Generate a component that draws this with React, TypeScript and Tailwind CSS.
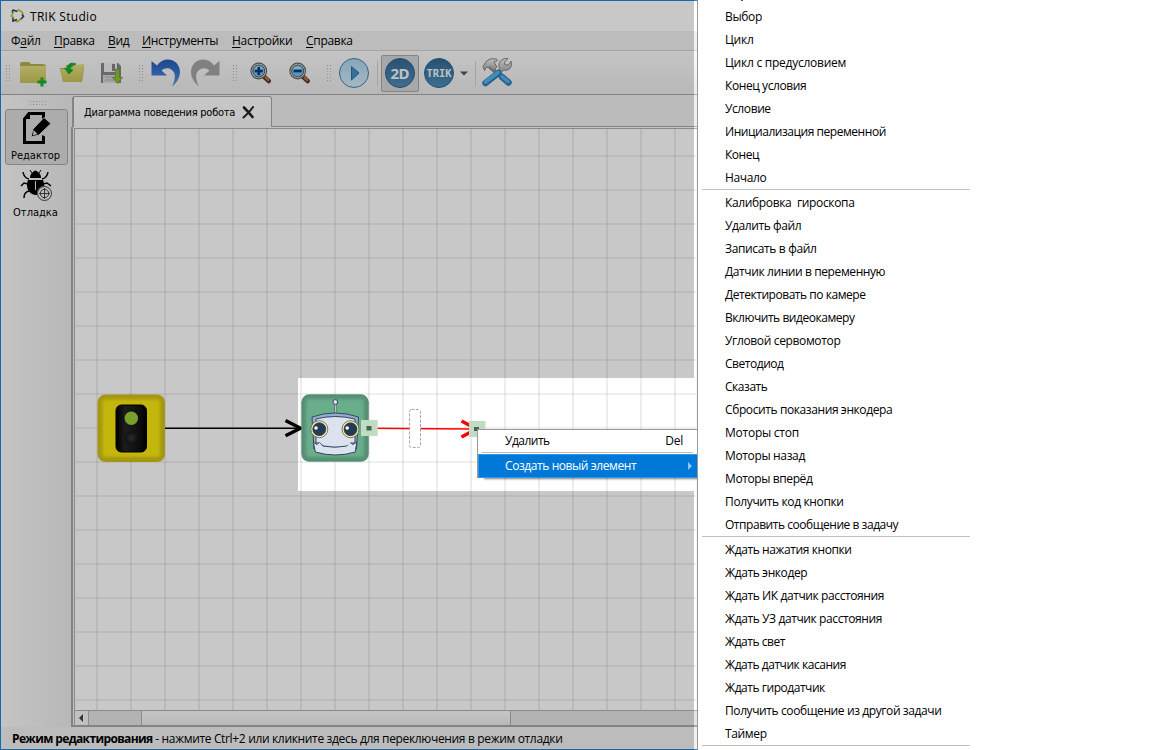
import React from "react";

const ui = "font-['Open_Sans','Noto_Sans',sans-serif]";
const tahoma = "font-['DejaVu_Sans_Condensed','DejaVu_Sans',sans-serif]";

function Cell({ x, w, children }: { x: number; w: number; children?: React.ReactNode }) {
  return (
    <svg className="h-[43px] shrink-0" width={w} height={43} viewBox={`${x} 51 ${w} 43`}>
      {children}
    </svg>
  );
}

function Grip({ x }: { x: number }) {
  return (
    <g fill="#b4b4b4">
      {[65, 68, 71, 74, 77, 80].map((y) => (
        <g key={y}>
          <rect x={x} y={y} width="1" height="1" />
          <rect x={x + 3} y={y} width="1" height="1" />
        </g>
      ))}
    </g>
  );
}

function Lens({ x, plus }: { x: number; plus?: boolean }) {
  return (
    <g transform={`translate(${x} 0)`}>
      <path d="M13 76l5.500 5" stroke="#4c3a30" strokeWidth="4.500" strokeLinecap="round" />
      <path d="M15.500 77.500l2.500 2.500" stroke="#bf7238" strokeWidth="2.500" strokeLinecap="round" />
      <circle cx="8.500" cy="71" r="7.800" fill="#e8e8e8" stroke="#666" strokeWidth="1.200" />
      <circle cx="8.500" cy="71" r="6" fill="#6fc0ea" stroke="#48565f" strokeWidth="1" />
      <path d="M4 69a5 5 0 0 1 9 0" fill="#a9dcf5" />
      <path d="M4.500 71h8" stroke="#0a3b78" strokeWidth="2.600" />
      {plus && <path d="M8.500 67v8" stroke="#0a3b78" strokeWidth="2.600" />}
    </g>
  );
}

function Toolbar() {
  return (
    <div className="flex h-[44px] border-b border-[#a9a9a9] bg-linear-to-b from-[#fafafa] to-[#ebebeb]">
      <Cell x={1} w={15}>
        <Grip x={6} />
      </Cell>
      <Cell x={16} w={38}>
        <defs>
          <linearGradient id="folder" x1="0" y1="0" x2="0" y2="1">
            <stop offset="0" stopColor="#e2df83" />
            <stop offset="1" stopColor="#c9c256" />
          </linearGradient>
        </defs>
        <path d="M20 64q0-2 2-2h7l2 2h12q3 0 3 3v14q0 2-2 2H22q-2 0-2-2z" fill="#b6af50" />
        <path d="M20 66h26v15q0 2-2 2H22q-2 0-2-2z" fill="url(#folder)" />
        <path d="M42 77.500v9M37.500 82h9" stroke="#22ac32" strokeWidth="3" />
      </Cell>
      <Cell x={54} w={42}>
        <path d="M60 68h6v-3h18v3l-2 14H63z" fill="#bbb34c" />
        <path d="M84.500 64l-3.500 18H63l-3-13h10l5-4z" fill="url(#folder)" />
        <path d="M76 64q-8-3-9 5l-2.500-1 4.500 6 4-4-3-.5q0-4 6-5.500z" fill="#16ac34" stroke="#16ac34" strokeWidth="1" />
      </Cell>
      <Cell x={96} w={38}>
        <path d="M101 63h17l3 3v17h-20z" fill="#84858d" />
        <rect x="104" y="63" width="13" height="9" fill="#eee" />
        <rect x="112" y="64" width="3" height="7" fill="#84858d" />
        <rect x="103" y="75" width="15" height="8" fill="#d8d8dc" />
        <path d="M105 77h10M105 80h10" stroke="#aaa" />
        <path d="M115.500 69h4v8.500h3l-5 6-5-6h3z" fill="#8bc22d" stroke="#65942a" strokeWidth=".7" />
      </Cell>
      <Cell x={134} w={13}>
        <Grip x={139} />
      </Cell>
      <Cell x={147} w={40}>
        <defs>
          <linearGradient id="undo" x1="0" y1="0" x2="0" y2="1">
            <stop offset="0" stopColor="#2559b4" />
            <stop offset="1" stopColor="#5493ec" />
          </linearGradient>
        </defs>
        <path d="M151.500 61v14.500H167l-5.500-5c5-4 11-2 13 3 1 4 0 8-2.500 13 6-5 8-10 8-15-1-13-16-16-23-6z" fill="url(#undo)" />
      </Cell>
      <Cell x={187} w={40}>
        <path d="M219.500 61v14.500H204l5.500-5c-5-4-11-2-13 3-1 4 0 8 2.500 13-6-5-8-10-8-15 1-13 16-16 23-6z" fill="#a4a4a4" />
      </Cell>
      <Cell x={227} w={18}>
        <Grip x={233} />
      </Cell>
      <Cell x={245} w={40}>
        <Lens x={250.3} plus />
      </Cell>
      <Cell x={285} w={36}>
        <Lens x={289.2} />
      </Cell>
      <Cell x={321} w={15}>
        <Grip x={327} />
      </Cell>
      <Cell x={336} w={40}>
        <defs>
          <linearGradient id="play" x1="0" y1="0" x2="0" y2="1">
            <stop offset="0" stopColor="#add4ed" />
            <stop offset="1" stopColor="#d3eafa" />
          </linearGradient>
        </defs>
        <circle cx="354" cy="73" r="14.500" fill="url(#play)" stroke="#4180ae" />
        <path d="M351.500 66.500v13.500l7.500-7z" fill="#4291c9" stroke="#326f9d" />
      </Cell>
      <Cell x={376} w={4}>
        <rect x="377" y="61" width="1" height="25" fill="#d0d0d0" />
      </Cell>
      <Cell x={380} w={40}>
        <defs>
          <linearGradient id="disc" x1="0" y1="0" x2="0" y2="1">
            <stop offset="0" stopColor="#356890" />
            <stop offset="1" stopColor="#4f8dbb" />
          </linearGradient>
        </defs>
        <rect x="381.500" y="55.500" width="37" height="36" rx="1.500" fill="#d6d6d6" stroke="#a8a8a8" />
        <circle cx="400" cy="73" r="14.500" fill="url(#disc)" stroke="#266698" />
        <text x="400" y="78.500" textAnchor="middle" fontSize="15" fontWeight="700" fill="#f3f7fa" className="font-['Noto_Sans',sans-serif]" textLength="19">2D</text>
      </Cell>
      <Cell x={420} w={54}>
        <circle cx="439" cy="73" r="14.500" fill="url(#disc)" stroke="#266698" />
        <text x="439" y="77" textAnchor="middle" fontSize="11" fontWeight="700" fill="#f3f7fa" className="font-['DejaVu_Sans_Mono',monospace]" textLength="25" lengthAdjust="spacingAndGlyphs">TRIK</text>
        <path d="M460 71.500h8l-4 4z" fill="#555" />
      </Cell>
      <Cell x={474} w={4}>
        <rect x="475" y="61" width="1" height="25" fill="#d0d0d0" />
      </Cell>
      <Cell x={478} w={40}>
        <defs>
          <linearGradient id="steel" x1="0" y1="0" x2="0" y2="1">
            <stop offset="0" stopColor="#f4f4f4" />
            <stop offset="1" stopColor="#a4a4a4" />
          </linearGradient>
        </defs>
        <path d="M489.500 66.500l10 9" stroke="#8d8d8d" strokeWidth="4" />
        <path d="M483 66.500l3.500-5.500q4-3.500 10-2l1 1.500-3.500 1.500 3 5-3.500 3.500-4-3.500-3.500.5-1.500 3z" fill="url(#steel)" stroke="#858585" />
        <path d="M497 71l2.500-2.500q-2-5.500 2-8.500 3-2 6.500-1.500l-3.500 3.500.5 3 3.500 0 2.500-4q2 5-1.500 8-3 2-6 1l-2.500 3z" fill="url(#steel)" stroke="#858585" />
        <path d="M502 77l6.500 5.500" stroke="#2f7fb6" strokeWidth="6.500" strokeLinecap="round" />
        <path d="M502 76.500l6 5" stroke="#5ab2ea" strokeWidth="3.500" strokeLinecap="round" />
        <path d="M498.500 73L485.500 83" stroke="#2f7fb6" strokeWidth="6.500" strokeLinecap="round" />
        <path d="M498 72.500L485.500 82" stroke="#5ab2ea" strokeWidth="3.800" strokeLinecap="round" />
      </Cell>
    </div>
  );
}

function TitleBar() {
  return (
    <div className="flex h-[31px] items-center border-t border-[#1f86db] bg-white pl-[9px]">
      <svg width="15" height="16" viewBox="0 0 15 16" fill="none" strokeWidth="1.600">
        <path d="M2.500 5V3.500q0-2 2-1l3 1" stroke="#34415c" />
        <path d="M7.500 1.500l4 2 2 3" stroke="#a3cf28" />
        <path d="M12 6.500l1.500 2-3 3" stroke="#34415c" />
        <path d="M11 10.500l-3 3H5.500" stroke="#a3cf28" />
        <path d="M7 11.500l-4 1.500V9" stroke="#34415c" />
        <path d="M4 10L1.500 8l2-4" stroke="#a3cf28" />
      </svg>
      <span className={`${ui} ml-[5px] pt-[2px] text-[12px] leading-none tracking-[0.3px]`}>TRIK Studio</span>
    </div>
  );
}

function MenuBar() {
  const items = [
    ["Ф", "а", "йл", "w-[43px]"],
    ["", "П", "равка", "w-[54px]"],
    ["", "В", "ид", "w-[34px]"],
    ["", "И", "нструменты", "w-[90px]"],
    ["", "Н", "астройки", "w-[74px]"],
    ["", "С", "правка", "w-[60px]"],
  ];
  return (
    <div className={`${ui} flex h-[20px] items-center border-b border-[#d2d2d2] bg-[#f0f0f0] pt-px pl-[10px] text-[12px] leading-none tracking-[-0.3px]`}>
      {items.map(([a, b, c, w]) => (
        <span key={b} className={`${w} shrink-0 whitespace-nowrap`}>
          {a}
          <span className="underline underline-offset-2">{b}</span>
          {c}
        </span>
      ))}
    </div>
  );
}

function Sidebar() {
  return (
    <div className={`${tahoma} flex w-[70px] shrink-0 flex-col bg-linear-to-r from-[#fafafa] to-[#ebebeb] pl-[4px] text-[11px] leading-none`}>
      <svg width="63" height="14" viewBox="5 95 63 14" fill="#b4b4b4" className="shrink-0">
        {[30, 33, 36, 39, 42, 45].map((x) => (
          <g key={x}>
            <rect x={x} y="101" width="1" height="1" />
            <rect x={x} y="104" width="1" height="1" />
          </g>
        ))}
      </svg>
      <div className="flex h-[56px] w-[63px] flex-col items-center rounded-[3px] border border-[#a8a8a8] bg-[#dcdcdc] pr-[2px]">
        <svg width="34" height="38" viewBox="18 110 34 38" className="shrink-0">
          <path d="M28 113.500h14.500v29H23.500V119z" fill="none" stroke="#000" strokeWidth="3" />
          <path d="M22 119l7-7v7z" fill="#000" />
          <path d="M41 121l6-5v22l-6-3z" fill="#dcdcdc" />
          <path d="M30 137l2-8L43 117.500l7 6L38 135z" fill="#000" stroke="#dcdcdc" strokeWidth="1" />
          <path d="M32.500 130l4 4-4.500 1.500z" fill="#dcdcdc" />
        </svg>
        <span className="mt-[2px]">Редактор</span>
      </div>
      <div className="flex w-[63px] flex-col items-center pr-[2px]">
        <svg width="36" height="38" viewBox="18 167 36 38" className="mt-[2px] shrink-0">
          <g fill="none" stroke="#000" strokeWidth="1.500">
            <path d="M29 179q-5-1-6-7M42 179q5-1 6-7M28 184l-4-1-3 3M43 184l4-1 4 3M29 191q-5 1-5 7" />
            <path d="M32 173l-2-3M39 173l2-3" strokeWidth="1" />
          </g>
          <path d="M30 178q0-4 3-6 2-3 5 0 3 2 3 6z" fill="#000" />
          <path d="M28 180h15q3 7-1 11-3 4-7 4-5-1-7-5-2-5 0-10z" fill="#000" />
          <path d="M35.500 181v9" stroke="#eee" strokeWidth="1" />
          <circle cx="44.500" cy="193.500" r="7.500" fill="#efefef" />
          <g fill="none" stroke="#333" strokeWidth=".9">
            <circle cx="44.500" cy="193.500" r="7" />
            <circle cx="44.500" cy="193.500" r="4.200" />
            <path d="M39 193.500h11M44.500 188v11" />
          </g>
        </svg>
        <span className="mt-[2px]">Отладка</span>
      </div>
    </div>
  );
}

const vertical = Array.from({ length: 18 }, (_, i) => 96 + i * 34);
const horizontal = Array.from({ length: 17 }, (_, i) => 155 + i * 34);

function Canvas() {
  return (
    <svg width="621" height="581" viewBox="75 129 621 581" className="block shrink-0 bg-white">
      <defs>
        <radialGradient id="lamp">
          <stop offset="0" stopColor="#3a3a3a" />
          <stop offset="1" stopColor="#151515" />
        </radialGradient>
        <linearGradient id="body">
          <stop offset="0" stopColor="#000" />
          <stop offset=".3" stopColor="#252525" />
          <stop offset=".8" stopColor="#101010" />
          <stop offset="1" stopColor="#000" />
        </linearGradient>
        <filter id="soft" x="-10%" y="-10%" width="120%" height="120%">
          <feGaussianBlur stdDeviation="1.500" />
        </filter>
      </defs>
      {vertical.map((x) => (
        <rect key={x} x={x} y="129" width="2" height="581" fill="#000" fillOpacity=".07" />
      ))}
      {horizontal.map((y) => (
        <rect key={y} x="75" y={y} width="622" height="2" fill="#000" fillOpacity=".06" />
      ))}

      <path d="M165 428.200h136" stroke="#000" strokeWidth="1.600" />
      <path d="M285.500 420.500l15 7.700-15 7.500" fill="none" stroke="#000" strokeWidth="3.400" />
      <rect x="97.500" y="394.500" width="67.500" height="67.500" rx="8" fill="#d2c017" />
      <rect x="102.500" y="399.500" width="57.500" height="57.500" rx="3" fill="#fae90d" filter="url(#soft)" />
      <rect x="116" y="405" width="30.500" height="47" rx="5.500" fill="url(#body)" stroke="#000" />
      <circle cx="131.300" cy="418.300" r="6.700" fill="#9bcc37" />
      <circle cx="131.300" cy="437.800" r="6.500" fill="url(#lamp)" />

      <rect x="301.300" y="394.300" width="67.500" height="67.500" rx="8" fill="#568f74" />
      <rect x="306" y="399" width="58" height="58" rx="3" fill="#69ad8b" filter="url(#soft)" />
      <g stroke="#34485c" strokeWidth="1">
        <path d="M334.500 403.500h1.600v10.500h-1.600z" fill="#dce2f0" strokeWidth=".6" />
        <circle cx="335.300" cy="402" r="2.400" fill="#dce2f0" />
        <path d="M312 417q23-8 46.500 0l-2 32H314z" fill="#91add0" />
        <path d="M316 419q19-5 39 0v24h-39z" fill="#dce2f0" />
        <path d="M313.300 442l3.500 2.500 3-2.500 3 4q12 2.500 24 0l3-4 3 2.500 4-2.500-1.500 10q-20 6-40 0z" fill="#dce2f0" />
        <path d="M317 440v-3h36v3l-5 5q-12 2.500-25 0z" fill="#dce2f0" stroke="none" />
      </g>
      {[319.3, 350.5].map((x) => (
        <g key={x}>
          <circle cx={x} cy="429.200" r="8.500" fill="#fff3a9" stroke="#565b4e" strokeWidth=".8" />
          <circle cx={x} cy="429.200" r="6.500" fill="#253a57" stroke="#2b333e" strokeWidth=".7" />
          <circle cx={x - 3.3} cy="428" r="1.800" fill="#fff" />
        </g>
      ))}

      <path d="M369 428.200L470 429" stroke="#f00" strokeWidth="1.400" />
      <path d="M461.500 421l15 8M461.500 437l15-8" stroke="#f00" strokeWidth="3.600" />
      <rect x="409.500" y="409.500" width="11" height="38" rx="2" fill="#fff" stroke="#a6a6a6" strokeDasharray="3 1.500" />
      <rect x="361" y="420" width="16.700" height="16" fill="#c0dcc3" />
      <rect x="366.500" y="426" width="5" height="4.500" fill="#466551" />
      <rect x="469" y="421" width="16.500" height="16" fill="#c0dcc3" />
      <rect x="474" y="427" width="5" height="4" fill="#466551" />
    </svg>
  );
}

function Workspace() {
  return (
    <div className="flex min-w-0 flex-1 flex-col bg-[#efefef]">
      <div className="flex h-[32px] shrink-0">
        <div className="mt-[1px] ml-px flex w-[200px] items-center rounded-t-[3px] border-t border-r border-l-2 border-[#a8a8a8] bg-linear-to-b from-white to-[#f8f8f8] pl-[10px]">
          <span className={`${tahoma} pt-px text-[11px] leading-none tracking-[-0.25px] whitespace-nowrap`}>
            Диаграмма поведения робота
          </span>
          <svg width="13" height="13" viewBox="0 0 13 13" className="mr-[16px] ml-auto shrink-0" fill="none" stroke="#222">
            <path d="M1.500 11.500Q7 7 11 1" strokeWidth="2" strokeLinecap="round" />
            <path d="M2 1.500q4 4 8.500 9.500" strokeWidth="2.600" strokeLinecap="round" />
          </svg>
        </div>
        <div className="flex-1 border-b border-[#a8a8a8]" />
      </div>
      <div className="flex flex-1 flex-col border-b-2 border-l-2 border-[#a8a8a8] bg-[#f8f8f8] pt-px pl-px">
        <div className="flex flex-1 flex-col border-t border-l border-[#b0b0b0]">
          <Canvas />
          <div className="flex flex-1 border-t border-[#b0b0b0] bg-[#e5e5e5]">
            <div className="flex w-[14px] items-center justify-center border-r border-[#b5b5b5] bg-[#f6f6f6] pr-px">
              <svg width="4" height="8" viewBox="0 0 4 8">
                <path d="M4 0v8L0 4z" fill="#444" />
              </svg>
            </div>
            <div className="w-[53px] border-r border-[#b0b0b0]" />
            <div className="w-[369px] border-r border-[#b0b0b0] bg-linear-to-b from-[#fbfbfb] to-[#ececec]" />
          </div>
        </div>
      </div>
    </div>
  );
}

const loose = "tracking-[-0.25px]";
const normal = "tracking-[-0.35px]";
const snug = "tracking-[-0.4px]";
const tight = "tracking-[-0.46px]";

const groups: [string, string][][] = [
  [
    ["Выбор", normal],
    ["Цикл", loose],
    ["Цикл с предусловием", loose],
    ["Конец условия", snug],
    ["Условие", snug],
    ["Инициализация переменной", tight],
    ["Конец", tight],
    ["Начало", normal],
  ],
  [
    ["Калибровка  гироскопа", normal],
    ["Удалить файл", snug],
    ["Записать в файл", normal],
    ["Датчик линии в переменную", snug],
    ["Детектировать по камере", tight],
    ["Включить видеокамеру", tight],
    ["Угловой сервомотор", normal],
    ["Светодиод", tight],
    ["Сказать", tight],
    ["Сбросить показания энкодера", snug],
    ["Моторы стоп", loose],
    ["Моторы назад", normal],
    ["Моторы вперёд", snug],
    ["Получить код кнопки", normal],
    ["Отправить сообщение в задачу", tight],
  ],
  [
    ["Ждать нажатия кнопки", snug],
    ["Ждать энкодер", snug],
    ["Ждать ИК датчик расстояния", snug],
    ["Ждать УЗ датчик расстояния", snug],
    ["Ждать свет", tight],
    ["Ждать датчик касания", tight],
    ["Ждать гиродатчик", tight],
    ["Получить сообщение из другой задачи", snug],
    ["Таймер", normal],
  ],
];

export default function App() {
  return (
    <div className="relative flex h-[750px] w-[1166px] overflow-hidden bg-white text-black">
      <div className="flex w-[697px] shrink-0 flex-col border-b border-l border-[#1f86db]">
        <TitleBar />
        <MenuBar />
        <Toolbar />
        <div className="flex h-[632px]">
          <Sidebar />
          <Workspace />
        </div>
        <div className={`${ui} flex flex-1 items-center bg-[#f0f0f0] pt-[2px] pl-[11px] text-[12px] leading-none tracking-[-0.34px] whitespace-pre`}>
          <b className="tracking-[-0.63px]">Режим редактирования</b>
          <span> - нажмите Ctrl+2 или кликните здесь для переключения в режим отладки</span>
        </div>
      </div>

      <div className="pointer-events-none absolute top-0 left-0 h-[750px] w-[694px] overflow-hidden">
        <div className="absolute top-[378px] left-[298px] h-[113px] w-[396px] shadow-[0_0_0_1200px_rgba(0,0,0,0.216)]" />
      </div>

      <div className={`${ui} absolute top-[429px] left-[477px] h-[49px] w-[220px] border-t border-l border-[#999] bg-white text-[12px] leading-none shadow-[5px_3px_2px_-2px_rgba(0,0,0,0.5)]`}>
        <div className="flex h-[22px] items-center justify-between pr-[14px] pl-[27px] tracking-[-0.5px]">
          <span>Удалить</span>
          <span className="tracking-[-0.2px]">Del</span>
        </div>
        <div className="mx-[4px] mb-[1px] h-px bg-[#bbb]" />
        <div className="flex h-[24px] items-center justify-between border border-r-0 border-[#2f98ee] bg-[#0078d7] pr-[5px] pl-[26px] tracking-[-0.42px] text-white">
          <span>Создать новый элемент</span>
          <svg width="4" height="8" viewBox="0 0 4 8">
            <path d="M0 0v8l4-4z" fill="#8ac8f7" />
          </svg>
        </div>
      </div>

      <div className={`${ui} relative flex flex-1 flex-col border-l border-[#999] bg-white pt-[5px] text-[12px]`}>
        <div className="absolute top-0 left-[43px] h-px w-[2px] bg-[#555]" />
        {groups.map((items, i) => (
          <div key={i}>
            {items.map(([label, spacing]) => (
              <div key={label} className={`${spacing} flex h-[23px] items-center pl-[27px] leading-none whitespace-pre`}>
                {label}
              </div>
            ))}
            <div className="mb-[1px] ml-[4px] h-px w-[268px] bg-[#c0c0c0]" />
          </div>
        ))}
      </div>
    </div>
  );
}
